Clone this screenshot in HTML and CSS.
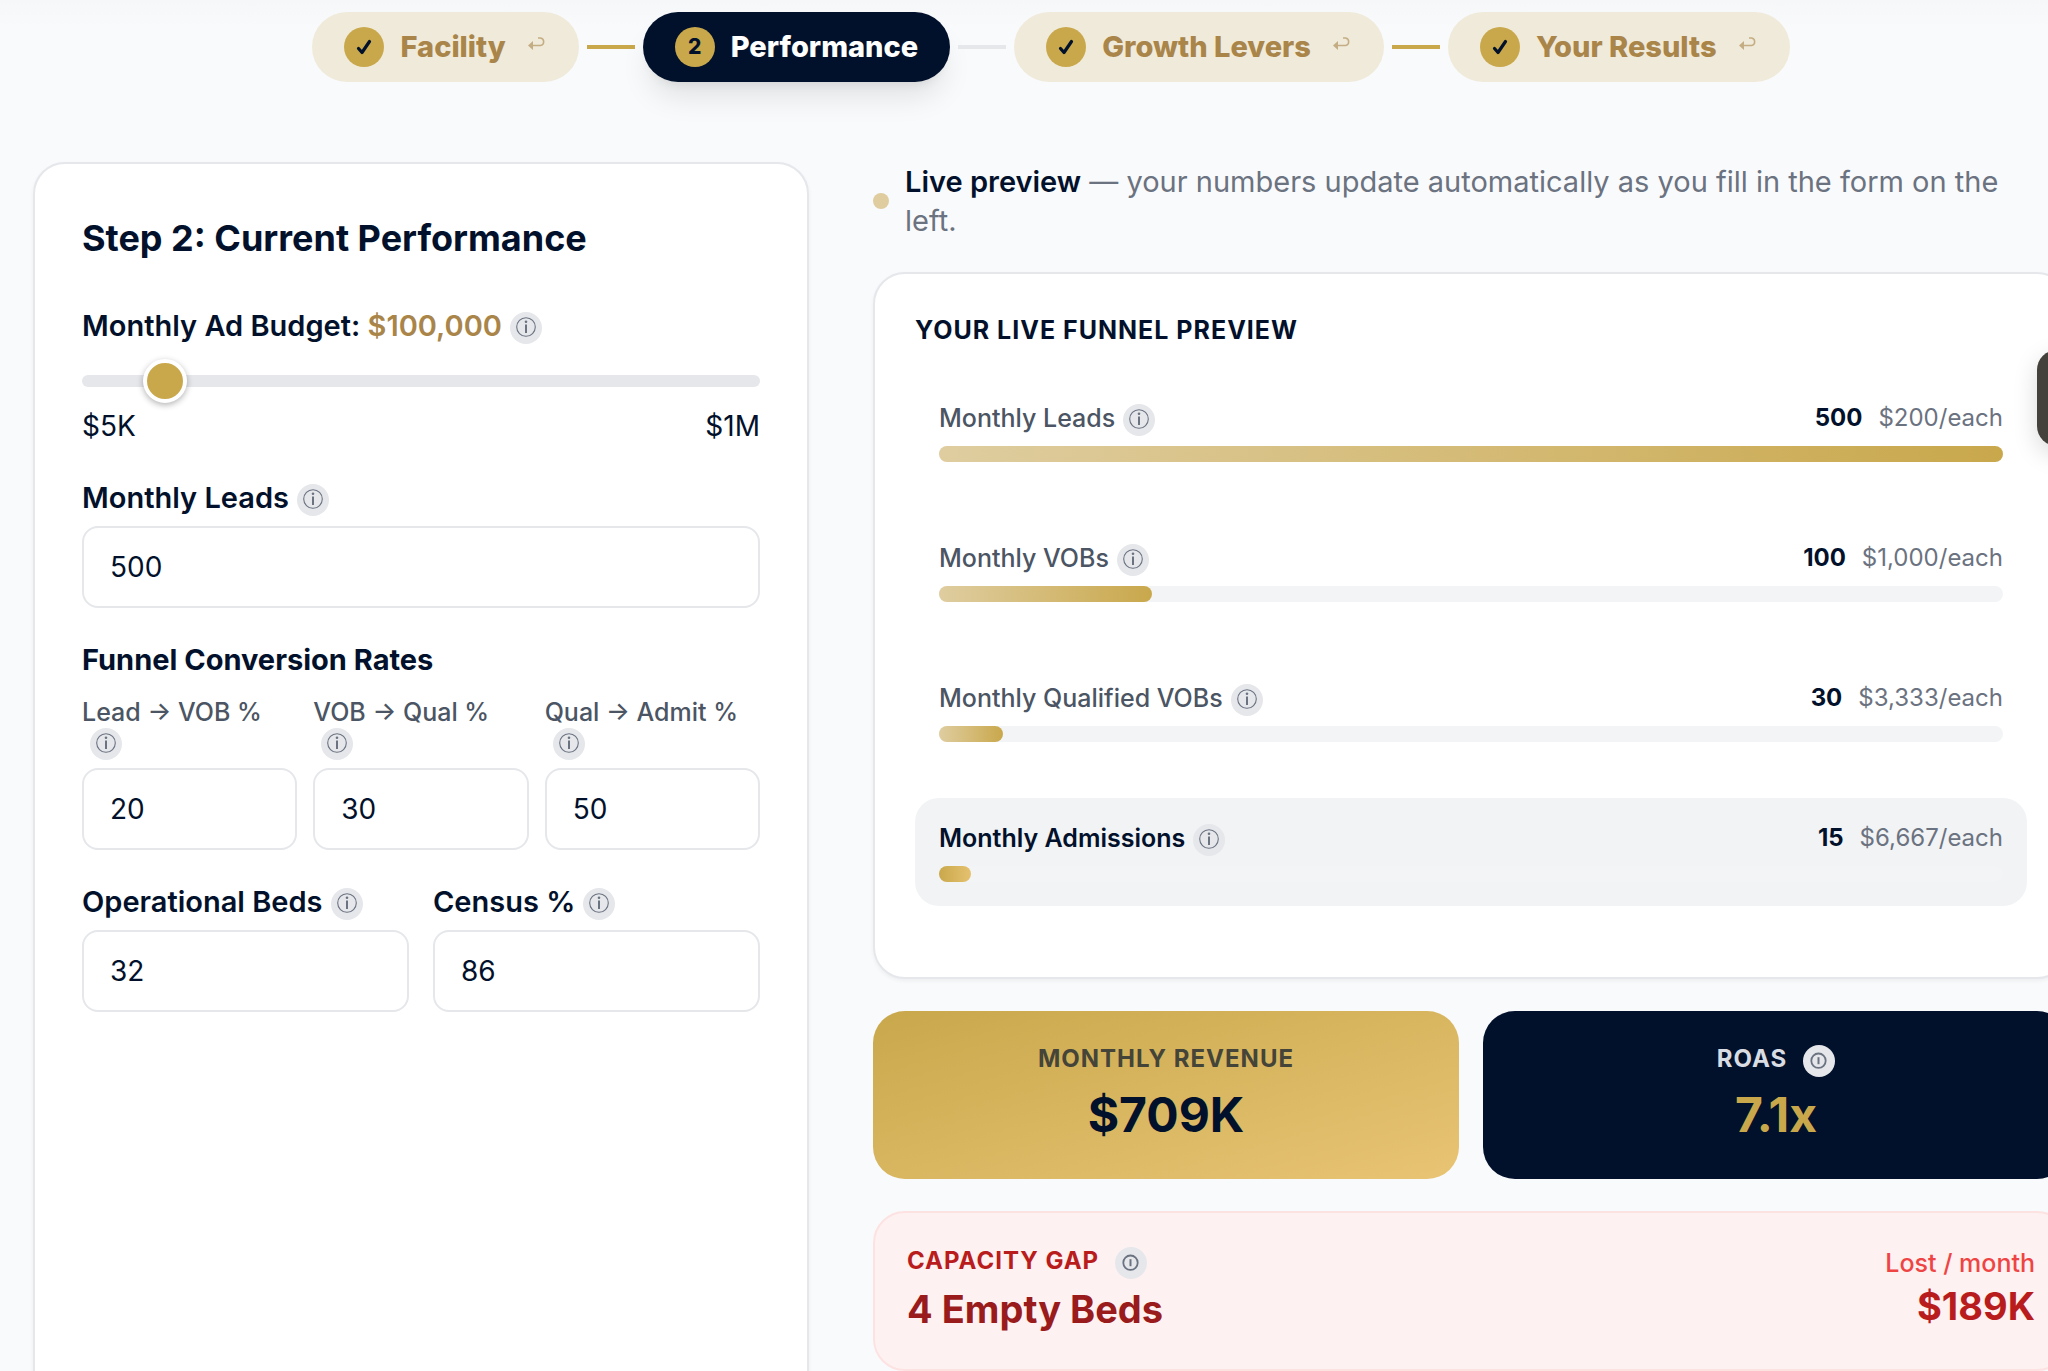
FILE: index.html
```html
<!DOCTYPE html>
<html lang="en">
<head>
<meta charset="utf-8">
<meta name="viewport" content="width=device-width, initial-scale=1">
<title>Step 2: Current Performance</title>
<link rel="stylesheet" href="styles.css">
</head>
<body>
<svg class="sprite" aria-hidden="true">
  <symbol id="check" viewBox="0 0 20 20"><path d="M4.500 11.500 8 15.500 15.500 4.500" fill="none" stroke="currentColor" stroke-width="3.200" stroke-linecap="round" stroke-linejoin="round"/></symbol>
  <symbol id="return" viewBox="0 0 20 16"><path d="M5 9.500h8.500a3.800 3.800 0 0 0 0-7.500h-2.500" fill="none" stroke="currentColor" stroke-width="1.500"/><path d="M1 9.500 6 5v9z" fill="currentColor"/></symbol>
  <symbol id="info" viewBox="0 0 32 32"><circle cx="16" cy="15" r="9.300" fill="none" stroke="currentColor" stroke-width="1.100"/><circle cx="16" cy="9.800" r="1.300" fill="currentColor"/><path d="M16 12.600v8.400" fill="none" stroke="currentColor" stroke-width="2"/></symbol>
  <symbol id="info-caps" viewBox="0 0 32 32"><circle cx="15.500" cy="15.700" r="7.200" fill="none" stroke="currentColor" stroke-width="1.800"/><path d="M15.500 12.200v7" fill="none" stroke="currentColor" stroke-width="2"/></symbol>
</svg>

<div class="page">
  <nav class="stepper" aria-label="Steps">
    <button class="step" type="button"><span class="step-mark"><svg class="check"><use href="#check"/></svg></span>Facility<svg class="return"><use href="#return"/></svg></button>
    <span class="connector done"></span>
    <button class="step current" type="button" aria-current="step"><span class="step-mark">2</span>Performance</button>
    <span class="connector"></span>
    <button class="step" type="button"><span class="step-mark"><svg class="check"><use href="#check"/></svg></span>Growth Levers<svg class="return"><use href="#return"/></svg></button>
    <span class="connector done"></span>
    <button class="step" type="button"><span class="step-mark"><svg class="check"><use href="#check"/></svg></span>Your Results<svg class="return"><use href="#return"/></svg></button>
  </nav>

  <main class="columns">
    <form class="card form-card">
      <h2 class="form-title">Step 2: Current Performance</h2>

      <div class="label-row">
        <label for="budget">Monthly Ad Budget: <output class="amount" for="budget">$100,000</output></label>
        <button class="info" type="button" aria-label="About ad budget"><svg><use href="#info"/></svg></button>
      </div>
      <input class="slider" id="budget" type="range" min="5000" max="1000000" step="1000" value="100000">
      <div class="range-ends"><span>$5K</span><span>$1M</span></div>

      <div class="field block">
        <div class="label-row">
          <label for="leads">Monthly Leads</label>
          <button class="info" type="button" aria-label="About leads"><svg><use href="#info"/></svg></button>
        </div>
        <input class="text-box" id="leads" type="text" inputmode="numeric" value="500">
      </div>

      <fieldset class="rates block">
        <legend>Funnel Conversion Rates</legend>
        <div class="rate-grid">
          <div class="field">
            <label class="rate-label" for="vob">Lead → VOB %</label>
            <button class="info below" type="button" aria-label="About lead to VOB rate"><svg><use href="#info"/></svg></button>
            <input class="text-box" id="vob" type="text" inputmode="numeric" value="20">
          </div>
          <div class="field">
            <label class="rate-label" for="qual">VOB → Qual %</label>
            <button class="info below" type="button" aria-label="About VOB to qualified rate"><svg><use href="#info"/></svg></button>
            <input class="text-box" id="qual" type="text" inputmode="numeric" value="30">
          </div>
          <div class="field">
            <label class="rate-label" for="admit">Qual → Admit %</label>
            <button class="info below" type="button" aria-label="About qualified to admission rate"><svg><use href="#info"/></svg></button>
            <input class="text-box" id="admit" type="text" inputmode="numeric" value="50">
          </div>
        </div>
      </fieldset>

      <div class="pair block">
        <div class="field">
          <div class="label-row">
            <label for="beds">Operational Beds</label>
            <button class="info" type="button" aria-label="About beds"><svg><use href="#info"/></svg></button>
          </div>
          <input class="text-box" id="beds" type="text" inputmode="numeric" value="32">
        </div>
        <div class="field">
          <div class="label-row">
            <label for="census">Census %</label>
            <button class="info" type="button" aria-label="About census"><svg><use href="#info"/></svg></button>
          </div>
          <input class="text-box" id="census" type="text" inputmode="numeric" value="86">
        </div>
      </div>
    </form>

    <div class="results">
      <div class="live">
        <span class="live-dot"></span>
        <p><strong>Live preview</strong> — your numbers update automatically as you fill in the form on the<br>left.</p>
      </div>

      <section class="card funnel">
        <h3 class="caps funnel-title">Your Live Funnel Preview</h3>
        <div class="funnel-rows">
          <div class="stage">
            <div class="stage-head"><span class="stage-name">Monthly Leads</span><button class="info" type="button" aria-label="About monthly leads"><svg><use href="#info"/></svg></button><span class="stage-value">500</span><span class="stage-cost">$200/each</span></div>
            <div class="bar"><div class="fill" style="width:100%"></div></div>
          </div>
          <div class="stage">
            <div class="stage-head"><span class="stage-name">Monthly VOBs</span><button class="info" type="button" aria-label="About monthly VOBs"><svg><use href="#info"/></svg></button><span class="stage-value">100</span><span class="stage-cost">$1,000/each</span></div>
            <div class="bar"><div class="fill" style="width:20%"></div></div>
          </div>
          <div class="stage">
            <div class="stage-head"><span class="stage-name">Monthly Qualified VOBs</span><button class="info" type="button" aria-label="About qualified VOBs"><svg><use href="#info"/></svg></button><span class="stage-value">30</span><span class="stage-cost">$3,333/each</span></div>
            <div class="bar"><div class="fill" style="width:6%"></div></div>
          </div>
          <div class="stage final">
            <div class="stage-head"><span class="stage-name">Monthly Admissions</span><button class="info" type="button" aria-label="About admissions"><svg><use href="#info"/></svg></button><span class="stage-value">15</span><span class="stage-cost">$6,667/each</span></div>
            <div class="bar"><div class="fill" style="width:3%"></div></div>
          </div>
        </div>
      </section>

      <div class="stats">
        <section class="stat gold">
          <h3 class="caps stat-label">Monthly Revenue</h3>
          <p class="stat-value">$709K</p>
        </section>
        <section class="stat navy">
          <h3 class="caps stat-label">ROAS<button class="info" type="button" aria-label="About ROAS"><svg><use href="#info-caps"/></svg></button></h3>
          <p class="stat-value">7.1x</p>
        </section>
      </div>

      <section class="gap-card">
        <div>
          <h3 class="caps gap-label">Capacity Gap<button class="info" type="button" aria-label="About capacity gap"><svg><use href="#info-caps"/></svg></button></h3>
          <p class="gap-beds">4 Empty Beds</p>
        </div>
        <div class="lost">
          <p class="lost-label">Lost / month</p>
          <p class="lost-value">$189K</p>
        </div>
      </section>
    </div>
  </main>
</div>
<button class="side-tab" type="button" aria-label="Open panel"></button>
</body>
</html>
```
FILE: styles.css
```css
:root {
  --navy: #02112b;
  --gold: #c9a84c;
  --gold-dark: #a9854a;
  --line: #e5e7eb;
  --muted: #6b7280;
}

* { box-sizing: border-box; }

html { scrollbar-width: none; }

body {
  margin: 0;
  overflow-x: hidden;
  background: linear-gradient(#f6f7f9, #f9fafc 28px);
  color: var(--navy);
  font: 400 28px/40px Inter, sans-serif;
}

h2, h3, p { margin: 0; }
button { font: inherit; border: 0; padding: 0; cursor: pointer; }
.sprite { position: absolute; width: 0; height: 0; }

/* the content runs a little past the right edge of the window */
.page {
  padding: 12px 0 40px 33px;
  margin-right: -21px;
}

/* stepper */
.stepper {
  display: flex;
  justify-content: center;
  align-items: center;
  gap: 8px;
  margin-bottom: 80px;
}
.step {
  display: flex;
  align-items: center;
  gap: 16px;
  height: 70px;
  padding: 0 32px;
  border-radius: 35px;
  background: #f0eada;
  color: var(--gold-dark);
  font-size: 29px;
  font-weight: 800;
  white-space: nowrap;
}
.step.current {
  background: var(--navy);
  color: #fff;
  box-shadow: 0 20px 30px -6px rgba(0, 0, 0, .1), 0 8px 12px -8px rgba(0, 0, 0, .1);
}
.step-mark {
  display: grid;
  place-items: center;
  width: 40px;
  height: 40px;
  border-radius: 50%;
  background: var(--gold);
  color: var(--navy);
  font-size: 21px;
}
.check { width: 20px; height: 20px; }
.return { width: 20px; height: 16px; margin: 0 0 6px 5px; opacity: .6; }
.connector { width: 48px; height: 4px; background: var(--line); }
.connector.done { background: var(--gold); }

.columns {
  display: grid;
  grid-template-columns: 194fr 299fr;
  gap: 64px;
}
.card {
  border: 2px solid var(--line);
  border-radius: 32px;
  background: #fff;
  box-shadow: 0 2px 4px rgba(0, 0, 0, .05);
}

/* form */
.form-card { padding: 50px 47px; }
.form-title {
  margin-bottom: 44px;
  font-size: 36px;
  line-height: 48px;
  font-weight: 700;
}
.block { margin-top: 32px; }
.field { display: flex; flex-direction: column; min-width: 0; }
.label-row {
  display: flex;
  align-items: center;
  gap: 8px;
  height: 40px;
  font-size: 29px;
  font-weight: 600;
  white-space: nowrap;
}
.amount { color: var(--gold-dark); }
.info {
  flex: none;
  width: 32px;
  height: 32px;
  margin-top: 4px;
  border-radius: 50%;
  background: var(--line);
  color: var(--muted);
}
.info svg { display: block; width: 32px; height: 32px; }
.info.below { margin: 0 0 0 8px; }

.slider {
  display: block;
  width: 100%;
  height: 46px;
  margin: 12px 0 2px;
  appearance: none;
  background: none;
}
.slider::-webkit-slider-runnable-track {
  height: 12px;
  border-radius: 6px;
  background: var(--line);
}
.slider::-webkit-slider-thumb {
  appearance: none;
  width: 44px;
  height: 44px;
  margin-top: -16px;
  border: 4px solid #fff;
  border-radius: 50%;
  background: var(--gold);
  box-shadow: 0 2px 6px rgba(0, 0, 0, .3);
}
.range-ends { display: flex; justify-content: space-between; }

.text-box {
  width: 100%;
  height: 82px;
  margin-top: 8px;
  padding: 0 26px;
  border: 2px solid var(--line);
  border-radius: 16px;
  background: #fff;
  color: var(--navy);
  font: inherit;
}
.rates { border: 0; padding: 0; margin-inline: 0; margin-bottom: 0; min-width: 0; }
.rates legend { padding: 0; font-size: 29px; font-weight: 700; }
.rate-grid {
  display: grid;
  grid-template-columns: repeat(3, 1fr);
  gap: 16px;
  margin-top: 16px;
}
.rate-label {
  color: #4b5563;
  font-size: 25px;
  line-height: 32px;
  font-weight: 500;
  white-space: nowrap;
}
.pair { display: grid; grid-template-columns: 1fr 1fr; gap: 24px; }

/* results */
.results {
  display: flex;
  flex-direction: column;
  gap: 32px;
  min-width: 0;
  padding-bottom: 40px;
}
.live {
  display: flex;
  align-items: center;
  gap: 16px;
  color: var(--muted);
  font-size: 29px;
  line-height: 39px;
}
.live strong { color: var(--navy); font-weight: 600; }
.live-dot {
  flex: none;
  width: 16px;
  height: 16px;
  border-radius: 50%;
  background: #dfcd9f;
}
.caps {
  font-size: 24px;
  line-height: 32px;
  font-weight: 700;
  letter-spacing: 1px;
  text-transform: uppercase;
}
.funnel { padding: 40px 40px 71px; }
.funnel-title { font-size: 25px; }
.funnel-rows {
  display: flex;
  flex-direction: column;
  gap: 32px;
  margin-top: 32px;
}
.stage { padding: 24px; border-radius: 24px; }
.stage.final { background: #f1f3f5; }
.stage-head {
  display: flex;
  align-items: center;
  height: 32px;
  margin-bottom: 12px;
  font-size: 24px;
}
.stage-name { margin-right: 8px; color: #4b5563; font-size: 25px; font-weight: 500; }
.final .stage-name { color: var(--navy); font-weight: 600; }
.stage-value { margin: 0 16px 0 auto; font-weight: 700; }
.stage-cost { color: var(--muted); }
.bar { height: 16px; border-radius: 8px; background: #f3f4f6; }
.fill {
  height: 16px;
  border-radius: 8px;
  background: linear-gradient(90deg, #dfcda0, var(--gold));
}
.final .fill { background: linear-gradient(90deg, var(--gold), #e5c16f); }

.stats { display: grid; grid-template-columns: 1fr 1fr; gap: 24px; }
.stat { padding: 32px; border-radius: 32px; text-align: center; }
.gold { background: linear-gradient(to bottom right, var(--gold), #e8c474); }
.navy { background: var(--navy); }
.stat-label {
  display: flex;
  justify-content: center;
  align-items: center;
  gap: 16px;
  height: 32px;
}
.gold .stat-label { color: #454438; }
.navy .stat-label { color: #d9dce2; }
.stat-value {
  margin-top: 8px;
  font-size: 48px;
  line-height: 64px;
  font-weight: 700;
}
.navy .stat-value { color: var(--gold); }

.gap-card {
  display: flex;
  justify-content: space-between;
  padding: 32px 32px 36px;
  border: 2px solid #fde2e2;
  border-radius: 32px;
  background: #fef1f1;
}
.gap-label {
  display: flex;
  align-items: center;
  gap: 16px;
  height: 32px;
  color: #b91c1c;
}
.gap-beds {
  margin-top: 8px;
  color: #991b1b;
  font-size: 38px;
  line-height: 48px;
  font-weight: 700;
}
.lost { text-align: right; }
.lost-label { color: #ef4444; font-size: 25px; line-height: 36px; font-weight: 500; }
.lost-value { color: #b91c1c; font-size: 38px; line-height: 50px; font-weight: 700; }

/* panel handle pinned to the window edge */
.side-tab {
  position: fixed;
  top: 350px;
  right: -85px;
  width: 96px;
  height: 96px;
  border-radius: 20px;
  background: #44403c;
  box-shadow: 0 8px 24px rgba(0, 0, 0, .15);
}
```
